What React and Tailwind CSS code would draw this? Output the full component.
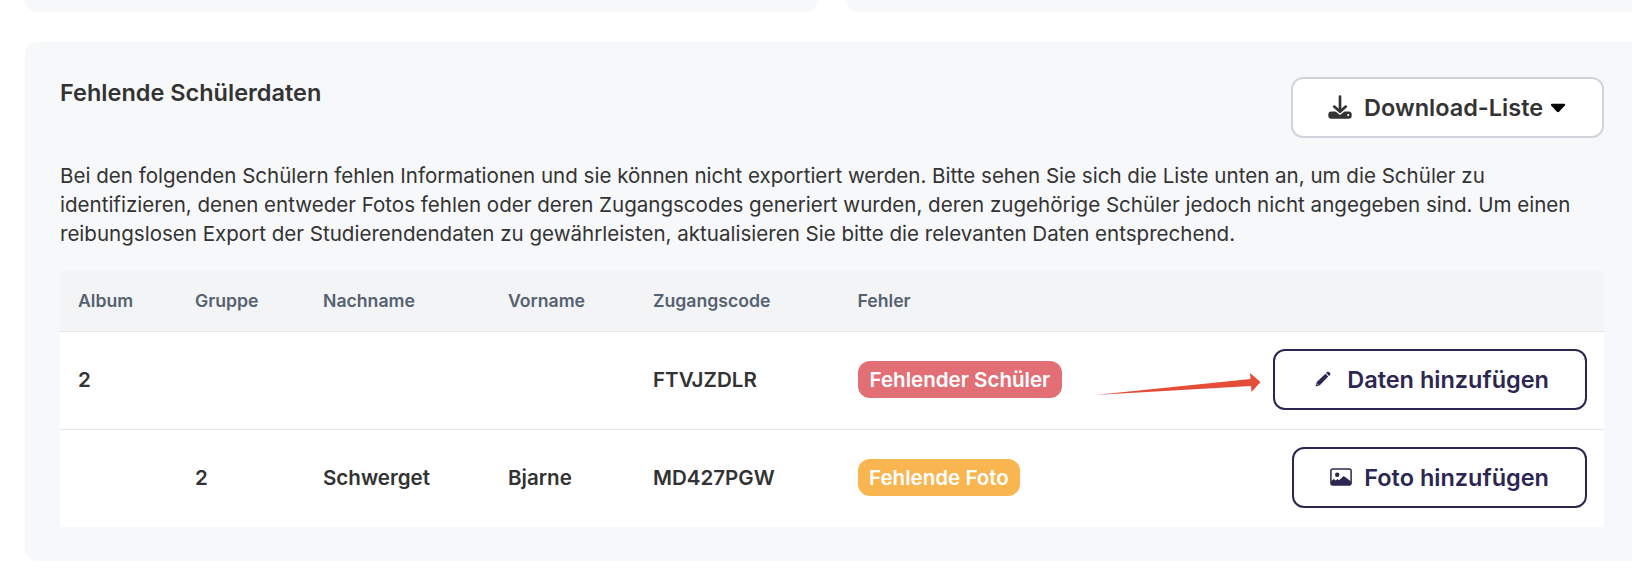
import React from "react";

const students = [
  {
    album: "2",
    group: "",
    lastName: "",
    firstName: "",
    code: "FTVJZDLR",
    error: "student",
  },
  {
    album: "",
    group: "2",
    lastName: "Schwerget",
    firstName: "Bjarne",
    code: "MD427PGW",
    error: "photo",
  },
];

const columns = [
  { label: "Album", width: "w-[117px]" },
  { label: "Gruppe", width: "w-[128px]" },
  { label: "Nachname", width: "w-[185px]" },
  { label: "Vorname", width: "w-[145px]" },
  { label: "Zugangscode", width: "w-[204.5px]" },
  { label: "Fehler", width: "w-[434px]" },
  { label: "", width: "" },
];

const DownloadIcon = () => (
  <svg width="24" height="24" viewBox="0 0 24 24" fill="none" className="shrink-0 mb-px">
    <rect x="0.3" y="16.6" width="23.4" height="7.2" rx="3" fill="#333333" />
    <path d="M7 16 L12 20 L17 16 Z" fill="#ffffff" />
    <path d="M12 1.7 V16 M6.2 11.6 L12 16.8 L17.8 11.6" stroke="#333333" strokeWidth="2.7" strokeLinecap="round" strokeLinejoin="round" />
    <circle cx="20.2" cy="20.1" r="1.1" fill="#ffffff" />
  </svg>
);

const PencilIcon = () => (
  <svg width="16" height="16" viewBox="0 0 16 16" fill="#2b2752" className="shrink-0 ml-[4px]">
    <path d="M10.4 2.7 L13.2 5.5 L4.8 14.2 L0.5 15.6 L1.8 11.1 Z" />
    <path d="M11.1 1.9 L12.1 0.9 Q13 0.2 13.9 0.9 L15.1 2.1 Q15.8 3 15.1 3.9 L14.1 4.9 Z" />
    <path d="M2.2 12.2 L3.8 13.7 L2.2 14.3 L1.6 13.7 Z" fill="#8d8aa3" />
  </svg>
);

const PictureIcon = () => (
  <svg width="22" height="18" viewBox="0 0 22 18" fill="none" className="shrink-0 mb-px">
    <rect x="0.9" y="0.9" width="20.2" height="16.2" rx="2" stroke="#2b2752" strokeWidth="1.5" />
    <circle cx="7.2" cy="6.8" r="2.2" fill="#2b2752" />
    <path d="M1.2 13 L3.8 11 L5.8 12.4 L7.4 11 L9 12.2 L13.7 8 L20.8 13.2 V17 H1.2 Z" fill="#2b2752" />
  </svg>
);

const Arrow = () => (
  <svg
    width="168"
    height="22"
    viewBox="0 0 168 22"
    className="absolute left-[237px] top-[12px] pointer-events-none"
  >
    <path d="M0 22 L155.5 6 L155 0 L165.5 9 L156.5 19 L156 13 Z" fill="#e44d37" />
  </svg>
);

const ErrorBadge = ({ type }) => {
  if (type === "student") {
    return (
      <span className="inline-flex items-center h-[37px] px-[12px] rounded-[12px] bg-[#e26f76] text-white">
        Fehlender Schüler
      </span>
    );
  }
  return (
    <span className="inline-flex items-center h-[37px] px-[11.5px] rounded-[12px] bg-[#f9b550] text-white">
      Fehlende Foto
    </span>
  );
};

const ActionButton = ({ icon, gap, children }) => (
  <button
    className={`inline-flex items-center h-[61px] px-[36px] rounded-[12px] border-2 border-[#2b2752] bg-white text-[#2b2752] text-[23.5px] font-semibold whitespace-nowrap ${gap}`}
  >
    {icon}
    {children}
  </button>
);

export default function App() {
  return (
    <div className="w-[1632px] h-[578px] overflow-hidden bg-white text-[#333333] font-['Inter',sans-serif]">
      {/* Bottom edge of the two cards above */}
      <div className="flex gap-[28.5px] pl-[24.5px] h-[12px]">
        <div className="w-[793px] rounded-b-[12px] bg-[#f7f8fa]" />
        <div className="flex-1 rounded-bl-[12px] bg-[#f7f8fa]" />
      </div>

      <section className="mt-[30px] ml-[24.5px] h-[519px] rounded-l-[12px] bg-[#f7f8fa] pl-[35.5px] pr-[28px] pt-[35px]">
        <div className="flex items-start justify-between">
          <h2 className="text-[23.5px] leading-[32px] font-semibold">Fehlende Schülerdaten</h2>
          <button className="flex items-center h-[61px] w-[313px] pl-[35px] rounded-[12px] border-2 border-[#d1d5db] bg-white text-[23.5px] font-semibold whitespace-nowrap">
            <DownloadIcon />
            <span className="ml-[12px]">Download-Liste</span>
            <svg width="16" height="10" viewBox="0 0 16 10" className="ml-[6.5px]">
              <path d="M1.8 0.8 H14.2 Q15.8 1 14.8 2.4 L9.3 8.6 Q8 9.8 6.7 8.6 L1.2 2.4 Q0.2 1 1.8 0.8 Z" fill="#000000" />
            </svg>
          </button>
        </div>

        <p className="mt-[24px] text-[20.55px] leading-[28.8px] whitespace-nowrap">
          Bei den folgenden Schülern fehlen Informationen und sie können nicht exportiert werden. Bitte sehen Sie sich die Liste unten an, um die Schüler zu
          <br />
          identifizieren, denen entweder Fotos fehlen oder deren Zugangscodes generiert wurden, deren zugehörige Schüler jedoch nicht angegeben sind. Um einen
          <br />
          reibungslosen Export der Studierendendaten zu gewährleisten, aktualisieren Sie bitte die relevanten Daten entsprechend.
        </p>

        <table className="mt-[22.6px] w-full table-fixed border-separate border-spacing-0 text-left">
          <thead>
            <tr className="h-[61px] bg-[#f2f4f6] text-[#566171] text-[17.65px]">
              {columns.map((col, i) => (
                <th key={i} className={`${col.width} p-0 pl-[18px] font-semibold border-b border-[#e5e7eb]`}>
                  {col.label}
                </th>
              ))}
            </tr>
          </thead>
          <tbody className="bg-white text-[20.55px] font-semibold whitespace-nowrap">
            {students.map((s, i) => {
              const line = i === 0 ? "border-b border-[#e5e7eb]" : "";
              return (
                <tr key={s.code} className={i === 0 ? "h-[98px]" : "h-[97px]"}>
                  <td className={`p-0 pl-[18px] ${line}`}>{s.album}</td>
                  <td className={`p-0 pl-[18px] ${line}`}>{s.group}</td>
                  <td className={`p-0 pl-[18px] ${line}`}>{s.lastName}</td>
                  <td className={`p-0 pl-[18px] ${line}`}>{s.firstName}</td>
                  <td className={`p-0 pl-[18px] ${line}`}>{s.code}</td>
                  <td className={`p-0 pl-[18px] pb-px ${line}`}>
                    <div className="relative flex">
                      <ErrorBadge type={s.error} />
                      {s.error === "student" && <Arrow />}
                    </div>
                  </td>
                  <td className={`p-0 pr-[17px] pb-[2px] ${line}`}>
                    <div className="flex justify-end">
                      {s.error === "student" ? (
                        <ActionButton icon={<PencilIcon />} gap="gap-[16px]">Daten hinzufügen</ActionButton>
                      ) : (
                        <ActionButton icon={<PictureIcon />} gap="gap-[12px]">Foto hinzufügen</ActionButton>
                      )}
                    </div>
                  </td>
                </tr>
              );
            })}
          </tbody>
        </table>
      </section>
    </div>
  );
}
